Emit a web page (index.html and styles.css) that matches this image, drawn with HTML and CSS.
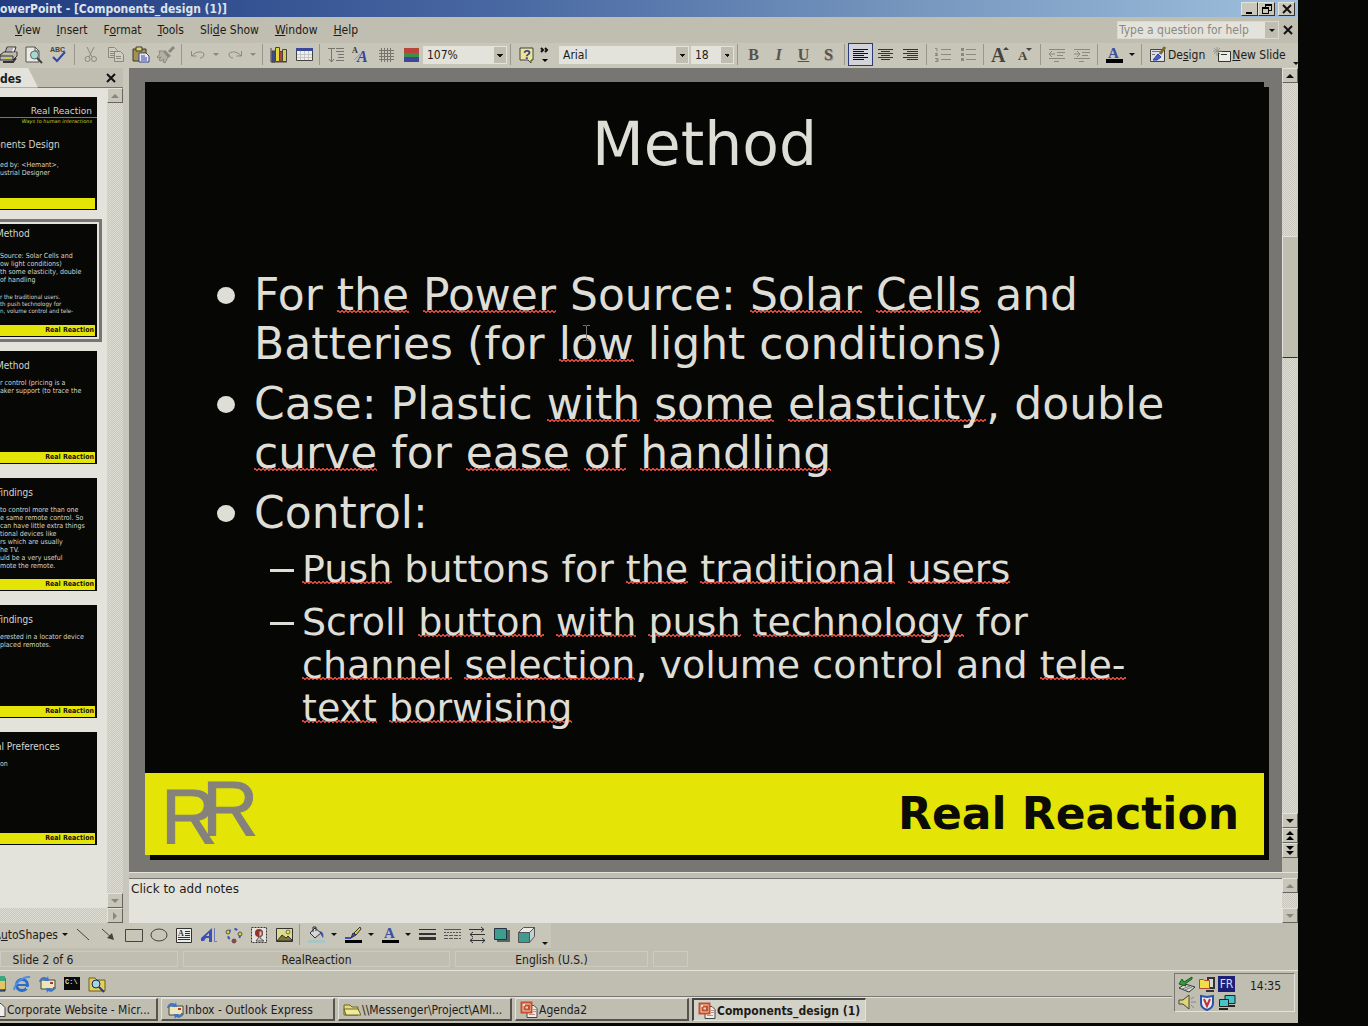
FILE: index.html
```html
<!DOCTYPE html>
<html lang="en">
<head>
<meta charset="utf-8">
<title>PowerPoint - [Components_design (1)]</title>
<link rel="stylesheet" href="styles.css">
</head>
<body>
<div class="screen">
  <header class="titlebar">
    <span class="title-text">owerPoint - [Components_design (1)]</span>
    <button class="win-btn" aria-label="Minimize"><svg width="14" height="12"><path d="M3 9h6v2H3z"/></svg></button>
    <button class="win-btn" aria-label="Restore"><svg width="14" height="12"><path d="M5 1h7v7H9V7h2V3H6v1H5zM2 4h7v7H2zm1 2v4h5V6z" fill-rule="evenodd"/></svg></button>
    <button class="win-btn win-close" aria-label="Close"><svg width="14" height="12"><path d="M3 2l8 8M11 2l-8 8" stroke="#111" stroke-width="2"/></svg></button>
  </header>

  <nav class="menubar">
    <button class="menu"><u>V</u>iew</button>
    <button class="menu"><u>I</u>nsert</button>
    <button class="menu">F<u>o</u>rmat</button>
    <button class="menu"><u>T</u>ools</button>
    <button class="menu">Sli<u>d</u>e Show</button>
    <button class="menu"><u>W</u>indow</button>
    <button class="menu"><u>H</u>elp</button>
    <div class="help-box">
      <input type="text" aria-label="Help question" placeholder="Type a question for help">
      <button class="drop" aria-label="Show questions"></button>
    </div>
    <button class="doc-close" aria-label="Close document"><svg width="10" height="10"><path d="M1 1l8 8M9 1l-8 8" stroke="#111" stroke-width="2"/></svg></button>
  </nav>

  <div class="toolbar">
    <button class="tool" aria-label="Print"><svg width="20" height="18"><path d="M6 7l2-6h9l-2 6" fill="#eee" stroke="#333"/><path d="M8 3h6M7 5h6" stroke="#777"/><path d="M1 9l4-3h13l-3 4z" fill="#c8c6bc" stroke="#333"/><path d="M1 9v5h13l4-4V6M14 14v-4H1" fill="#bbb9ae" stroke="#333"/><path d="M4 16h10l3-4" fill="none" stroke="#333" stroke-width="2"/><path d="M6 12h5" stroke="#d6c832" stroke-width="2"/></svg></button>
    <button class="tool" aria-label="Print Preview"><svg width="20" height="18"><path d="M2 1h9l4 4v11H2z" fill="#e9e9e2" stroke="#555"/><path d="M11 1v4h4" fill="none" stroke="#555"/><circle cx="10.500" cy="9" r="4" fill="#a5d8d4" stroke="#666"/><path d="M13 12l5 5" stroke="#45433b" stroke-width="2"/></svg></button>
    <button class="tool" aria-label="Spelling"><svg width="20" height="18"><text x="1" y="6" class="ico-abc">ABC</text><path d="M4 11l4 4 8-9" fill="none" stroke="#3446a4" stroke-width="2"/></svg></button>
    <span class="sep"></span>
    <button class="tool" aria-label="Cut"><svg width="18" height="18" stroke="#8b897f"><path d="M5 1l5 10M12 1L7 11"/><circle cx="5.500" cy="13" r="2.500" fill="none"/><circle cx="12" cy="13" r="2.500" fill="none"/></svg></button>
    <button class="tool" aria-label="Copy"><svg width="18" height="18" fill="#cfcdc2" stroke="#8b897f"><path d="M1.500 1.500h6l3 3v7h-9zM3 5.500h5M3 7.500h5M3 9.500h5"/><path d="M7.500 5.500h6l3 3v7h-9zM9 10.500h5M9 12.500h5"/></svg></button>
    <button class="tool" aria-label="Paste"><svg width="20" height="18"><path d="M2 3h13v12H2z" fill="#a3924e" stroke="#3c3a2b"/><path d="M5 1h6v4H5z" fill="#d8d46b" stroke="#3c3a2b"/><path d="M8 7h7l3 3v6H8z" fill="#e9e9ee" stroke="#3543a0"/><path d="M10 10h4M10 12h6M10 14h6" stroke="#3543a0"/></svg></button>
    <button class="tool" aria-label="Format Painter"><svg width="20" height="18"><path d="M18 1l-5 5" stroke="#8b897f" stroke-width="3"/><path d="M9 4l6 6-3 2-6-6z" fill="#8b897f"/><path d="M3 5h4l5 6-3 6-2-1 1-3-3 2-2-1 2-3-3 1-1-1 3-3z" fill="#b3b1a6" stroke="#8b897f"/></svg></button>
    <span class="sep"></span>
    <button class="tool" aria-label="Undo"><svg width="18" height="18"><path d="M2.500 5v5h5M3 10c3-5 11-5 12-2 0 3-2 4-4 4" fill="none" stroke="#8b897f"/></svg></button>
    <button class="arrow dim" aria-label="Undo list"></button>
    <button class="tool" aria-label="Redo"><svg width="18" height="18"><path d="M15.500 5v5h-5M15 10c-3-5-11-5-12-2 0 3 2 4 4 4" fill="none" stroke="#8b897f"/></svg></button>
    <button class="arrow dim" aria-label="Redo list"></button>
    <span class="sep"></span>
    <button class="tool" aria-label="Insert Chart"><svg width="18" height="18" stroke="#444"><path d="M1 2v14h16" fill="none"/><path d="M2 5h3v11H2z" fill="#3a49b4"/><path d="M5.500 1.500h4v14h-4z" fill="#e1d63b"/><path d="M9.500 5.500h3v10h-3z" fill="#b44437"/><path d="M12.500 3.500h4v12h-4z" fill="#d9cf4a"/></svg></button>
    <button class="tool" aria-label="Insert Table"><svg width="18" height="18"><path d="M1.500 2.500h16v12h-16z" fill="#eee" stroke="#45433e"/><path d="M1 2h17v3H1z" fill="#3a4898"/><path d="M2 8.500h15M2 11.500h15M5.500 5v9M9.500 5v9M13.500 5v9" stroke="#c5c5c5"/></svg></button>
    <span class="sep"></span>
    <button class="tool" aria-label="Expand All"><svg width="18" height="18" stroke="#77756d" fill="none"><path d="M4.500 2v14M2 13l2.500 3 2.500-3M1 2.500h7M9 2.500h8M9 5.500h8M11 8.500h6M11 11.500h6M9 14.500h8"/></svg></button>
    <button class="tool" aria-label="Show Formatting"><svg width="20" height="18"><text x="1" y="7" class="ico-small-a">A</text><path d="M3 14l6-6" stroke="#999"/><text x="6" y="16" class="ico-blue-a">A</text></svg></button>
    <button class="tool" aria-label="Show Grid"><svg width="18" height="18" stroke="#77756d"><path d="M4.500 2v14M7.500 2v14M10.500 2v14M13.500 2v14M2 4.500h15M2 7.500h15M2 10.500h15M2 13.500h15"/></svg></button>
    <button class="tool" aria-label="Color"><svg width="18" height="18"><path d="M2 2h15v5H2z" fill="#b9443b"/><path d="M2 7h15v4H2z" fill="#3d8e46"/><path d="M2 11h15v5H2z" fill="#3d469c"/></svg></button>
    <select class="combo zoom" aria-label="Zoom"><option>107%</option></select>
    <span class="sep"></span>
    <button class="tool" aria-label="Help"><svg width="18" height="18"><path d="M2 2h13v12h-2v3l-3-3H2z" fill="#e8e79b" stroke="#45433b"/><text x="5" y="13" class="ico-help">?</text></svg></button>
    <button class="more" aria-label="More buttons"><svg width="12" height="16"><path d="M2 1l2 2-2 2M6 1l2 2-2 2" fill="none" stroke="#111" stroke-width="2"/><path d="M3 12h6l-3 3z"/></svg></button>
    <span class="grip"></span>
    <select class="combo font-name" aria-label="Font"><option>Arial</option></select>
    <select class="combo font-size" aria-label="Font size"><option>18</option></select>
    <span class="sep"></span>
    <button class="tool letter"><b>B</b></button>
    <button class="tool letter"><i>I</i></button>
    <button class="tool letter"><u>U</u></button>
    <button class="tool letter shadowed">S</button>
    <span class="sep"></span>
    <button class="tool pressed" aria-label="Align Left"><svg width="18" height="14" stroke="#111"><path d="M1 1.500h15M1 3.500h11M1 5.500h15M1 7.500h11M1 9.500h15M1 11.500h11"/></svg></button>
    <button class="tool" aria-label="Center"><svg width="18" height="14" stroke="#333"><path d="M1 1.500h15M4 3.500h9M1 5.500h15M4 7.500h9M1 9.500h15M4 11.500h9"/></svg></button>
    <button class="tool" aria-label="Align Right"><svg width="18" height="14" stroke="#333"><path d="M1 1.500h15M5 3.500h11M1 5.500h15M5 7.500h11M1 9.500h15M5 11.500h11"/></svg></button>
    <span class="sep"></span>
    <button class="tool" aria-label="Numbering"><svg width="18" height="16" stroke="#8b897f"><path d="M7 2.500h10M7 7.500h10M7 12.500h10M1 1.500h2v3M1 6.500h3l-3 2h3M1 11.500h3v3H1M2 13h2" fill="none"/></svg></button>
    <button class="tool" aria-label="Bullets"><svg width="18" height="16" stroke="#8b897f"><path d="M7 2.500h10M7 7.500h10M7 12.500h10"/><path d="M2 2.500h3M2 7.500h3M2 12.500h3" stroke-width="3"/></svg></button>
    <span class="sep"></span>
    <button class="tool" aria-label="Increase Font Size"><svg width="20" height="18"><text x="1" y="16" class="ico-big-a">A</text><path d="M13 4h6l-3-3z" fill="#444"/></svg></button>
    <button class="tool" aria-label="Decrease Font Size"><svg width="20" height="18"><text x="3" y="14" class="ico-mid-a">A</text><path d="M11 2h6l-3 3z" fill="#444"/></svg></button>
    <span class="sep"></span>
    <button class="tool" aria-label="Decrease Indent"><svg width="18" height="16" stroke="#8b897f" fill="none"><path d="M1 2.500h16M9 5.500h8M9 8.500h6M1 11.500h16M6 14.500h5M1 7h6M4 4L1 7l3 3"/></svg></button>
    <button class="tool" aria-label="Increase Indent"><svg width="18" height="16" stroke="#8b897f" fill="none"><path d="M1 2.500h16M9 5.500h8M9 8.500h6M1 11.500h16M6 14.500h5M1 7h6M4 4l3 3-3 3"/></svg></button>
    <span class="sep"></span>
    <button class="tool" aria-label="Font Color"><svg width="18" height="18"><text x="3" y="12" class="ico-font-a">A</text><path d="M1 13h17v4H1z"/></svg></button>
    <button class="arrow" aria-label="Font colors"></button>
    <span class="sep"></span>
    <button class="tool wide"><svg width="18" height="18"><path d="M1.500 3.500h14v12h-14z" fill="#dfdfe6" stroke="#45433e"/><path d="M3 5.500h8M3 8.500h3" stroke="#777"/><path d="M4 14l5-6 3 3-4 3z" fill="#4b62c8" stroke="#2a3da0"/><path d="M11 8l5-7" stroke="#7d6a30" stroke-width="3"/></svg><span>De<u>s</u>ign</span></button>
    <button class="tool wide"><svg width="18" height="16"><path d="M5.500 4.500h12v10h-12z" fill="#ecece6" stroke="#333"/><path d="M8 7.500h6" stroke="#333"/><path d="M4 0v9M0 4h9M1 1l6 6M7 1L1 7" stroke="#99978c"/></svg><span><u>N</u>ew Slide</span></button>
    <button class="arrow low" aria-label="Toolbar options"></button>
  </div>

  <main class="workspace">
    <aside class="outline">
      <div class="tabs">
        <button class="tab">des</button>
        <button class="pane-close" aria-label="Close pane"><svg width="10" height="10"><path d="M1 1l8 8M9 1l-8 8" stroke="#111" stroke-width="2"/></svg></button>
      </div>
      <div class="outline-body">
        <div class="thumbs">
          <section class="thumb cover">
            <p class="brand">Real Reaction</p>
            <p class="slogan">Ways to human interactions</p>
            <h3>onents Design</h3>
            <p>ed by: &lt;Hemant&gt;,<br>ustrial Designer</p>
            <div class="band"></div>
          </section>
          <section class="thumb selected">
            <h3>Method</h3>
            <p>Source: Solar Cells and<br>ow light conditions)<br>th some elasticity, double<br>of handling</p>
            <p class="sub">r the traditional users.<br>th push technology for<br>n, volume control and tele-</p>
            <div class="band">Real Reaction</div>
          </section>
          <section class="thumb">
            <h3>Method</h3>
            <p>r control (pricing is a<br>aker support (to trace the</p>
            <div class="band">Real Reaction</div>
          </section>
          <section class="thumb">
            <h3>Findings</h3>
            <p>to control more than one<br>e same remote control. So<br>can have little extra things<br>tional devices like<br>rs which are usually<br>he TV.<br>uld be a very useful<br>mote the remote.</p>
            <div class="band">Real Reaction</div>
          </section>
          <section class="thumb">
            <h3>Findings</h3>
            <p>erested in a locator device<br>placed remotes.</p>
            <div class="band">Real Reaction</div>
          </section>
          <section class="thumb">
            <h3>al Preferences</h3>
            <p>on</p>
            <div class="band">Real Reaction</div>
          </section>
        </div>
        <div class="vbar">
          <button class="sb dim up" aria-label="Scroll slides up"></button>
          <span class="track"></span>
          <button class="sb dim down" aria-label="Scroll slides down"></button>
        </div>
        <div class="hbar">
          <span class="track"></span>
          <button class="sb dim right" aria-label="Scroll slides right"></button>
        </div>
      </div>
    </aside>

    <div class="editor">
      <div class="stage-row">
        <div class="stage">
          <article class="slide">
            <h1>Method</h1>
            <ul class="points">
              <li>For <s>the</s> <s>Power</s> Source: <s>Solar</s> <s>Cells</s> and<br>Batteries (for <s>low</s> light conditions)</li>
              <li>Case: Plastic <s>with</s> <s>some</s> <s>elasticity</s>, double<br><s>curve</s> for <s>ease</s> <s>of</s> <s>handling</s></li>
              <li>Control:
                <ul class="subpoints">
                  <li><s>Push</s> buttons for <s>the</s> <s>traditional</s> <s>users</s></li>
                  <li>Scroll <s>button</s> <s>with</s> <s>push</s> <s>technology</s> for<br><s>channel</s> <s>selection</s>, volume control and <s>tele-</s><br><s>text</s> <s>borwising</s></li>
                </ul>
              </li>
            </ul>
            <svg class="cursor" width="9" height="18"><path d="M1 1.500h3l.5 1 .5-1h3M4.500 2v14M1 16.500h3l.5-1 .5 1h3" fill="none" stroke="#77776f"/></svg>
            <footer class="slide-band">
              <svg class="logo" width="120" height="82"><text x="16" y="70">R</text><text x="57" y="62">R</text></svg>
              <span>Real Reaction</span>
            </footer>
          </article>
        </div>
        <div class="vbar main">
          <button class="sb up" aria-label="Scroll up"></button>
          <span class="track t1"></span>
          <span class="knob"></span>
          <span class="track t2"></span>
          <button class="sb down" aria-label="Scroll down"></button>
          <button class="sb nav" aria-label="Previous slide"><svg width="10" height="10"><path d="M1 4l4-4 4 4zM1 9l4-4 4 4z"/></svg></button>
          <button class="sb nav" aria-label="Next slide"><svg width="10" height="10"><path d="M1 0h8L5 4zM1 5h8L5 9z"/></svg></button>
          <span class="rest"></span>
        </div>
      </div>
      <div class="notes-row">
        <textarea class="notes" aria-label="Notes" placeholder="Click to add notes"></textarea>
        <div class="vbar">
          <button class="sb dim up" aria-label="Scroll notes up"></button>
          <span class="track"></span>
          <button class="sb dim down" aria-label="Scroll notes down"></button>
        </div>
      </div>
    </div>
  </main>

  <div class="drawbar">
    <div class="drawtools">
      <button class="shapes">A<u>u</u>toShapes</button>
      <button class="arrow" aria-label="AutoShapes list"></button>
      <button class="tool" aria-label="Line"><svg width="18" height="18"><path d="M2 3l12 11" stroke="#45433e"/></svg></button>
      <button class="tool" aria-label="Arrow"><svg width="18" height="18"><path d="M2 3l10 9" stroke="#45433e"/><path d="M14 14l-7-2 5-5z" fill="#45433e"/></svg></button>
      <button class="tool" aria-label="Rectangle"><svg width="18" height="18"><path d="M.5 3.500h17v12H.5z" fill="none" stroke="#45433e"/></svg></button>
      <button class="tool" aria-label="Oval"><svg width="18" height="18"><ellipse cx="9" cy="9" rx="8" ry="6" fill="none" stroke="#45433e"/></svg></button>
      <button class="tool" aria-label="Text Box"><svg width="18" height="18"><path d="M1.500 2.500h15v14h-15z" fill="#ecece6" stroke="#333"/><text x="3" y="10" class="ico-small-a">A</text><path d="M10 5.500h5M10 7.500h5M10 9.500h5M3 11.500h12M3 13.500h12" stroke="#333"/></svg></button>
      <button class="tool" aria-label="WordArt"><svg width="20" height="18"><path d="M2 12L13 2v14h-3v-4H7l-2 3H2zM10 10V7l-3 3z" fill="#3c50b4" fill-rule="evenodd"/><path d="M15.500 2v13.500H18" fill="none" stroke="#6a77b8"/></svg></button>
      <button class="tool" aria-label="Diagram"><svg width="20" height="18"><circle cx="10" cy="9" r="6" fill="none" stroke="#3c50b4" stroke-width="2" stroke-dasharray="3 4"/><circle cx="4" cy="6" r="2" fill="#d9d03c" stroke="#555"/><circle cx="16" cy="8" r="2" fill="#d9d03c" stroke="#555"/><circle cx="10" cy="15" r="2" fill="#b43a33" stroke="#555"/></svg></button>
      <button class="tool" aria-label="Clip Art"><svg width="18" height="18"><path d="M1.500 1.500h15v15h-15z" fill="#e6e4df" stroke="#333" stroke-dasharray="2 1"/><circle cx="9" cy="7" r="4" fill="#9c2f2a"/><path d="M9 5h3v5h-2v2l4 3H6l3-4z" fill="#e6c9b8" stroke="#555"/></svg></button>
      <button class="tool" aria-label="Picture"><svg width="18" height="18"><path d="M1.500 2.500h16v13h-16z" fill="#dfdb8c" stroke="#333"/><path d="M2 15l5-6 4 3 2-2 4 4v1z" fill="#77763d" stroke="#333"/><circle cx="13" cy="6" r="2" fill="#f0e94a" stroke="#666"/></svg></button>
      <span class="sep"></span>
      <button class="tool" aria-label="Fill Color"><svg width="18" height="18"><path d="M3 7l5-5 6 5-6 5z" fill="#d5d6dc" stroke="#333"/><path d="M6 6V1h3v4" fill="none" stroke="#333"/><path d="M13 5c3 1 4 4 3 7l-2-3z" fill="#3c50b4"/><path d="M1 14h17v3H1z" fill="#a9c6c6"/></svg></button>
      <button class="arrow" aria-label="Fill colors"></button>
      <button class="tool" aria-label="Line Color"><svg width="18" height="18"><path d="M1 12h6" stroke="#3c50b4" stroke-width="2"/><path d="M7 12l2-5 3 2z" fill="#3c50b4" stroke="#333"/><path d="M10 7l6-6 1 2-5 6z" fill="#d9d03c" stroke="#333"/><path d="M1 14h17v3H1z"/></svg></button>
      <button class="arrow" aria-label="Line colors"></button>
      <button class="tool" aria-label="Font Color"><svg width="18" height="18"><text x="3" y="12" class="ico-font-a">A</text><path d="M1 14h17v3H1z"/></svg></button>
      <button class="arrow" aria-label="Font colors"></button>
      <button class="tool" aria-label="Line Style"><svg width="18" height="16" stroke="#333"><path d="M1 2.500h17"/><path d="M1 7h17" stroke-width="2"/><path d="M1 11.500h17" stroke-width="3"/></svg></button>
      <button class="tool" aria-label="Dash Style"><svg width="18" height="16" stroke="#555"><path d="M1 2.500h17"/><path d="M1 5.500h17" stroke-dasharray="2 1"/><path d="M1 8.500h17M1 11.500h17" stroke-dasharray="4 1"/></svg></button>
      <button class="tool" aria-label="Arrow Style"><svg width="18" height="18" stroke="#333" fill="none"><path d="M1 3.500h15M13 1l3 2.500-3 2.500M2 8.500h15M5 6L2 8.500 5 11M2 14.500h15M5 12l-3 2.500L5 17M14 12l3 2.500-3 2.500"/></svg></button>
      <button class="tool" aria-label="Shadow Style"><svg width="18" height="18"><path d="M4 4h13v12H4z" fill="#55665f"/><path d="M1.500 2.500h12v11h-12z" fill="#3f9d90" stroke="#234"/></svg></button>
      <button class="tool" aria-label="3-D Style"><svg width="20" height="18" stroke="#555"><path d="M1.500 6.500l5-5h11l-5 5z" fill="#e8e8e4"/><path d="M12.500 6.500l5-5v9l-5 6z" fill="#c5d0ce"/><path d="M1.500 6.500h11v10h-11z" fill="#3f9d90"/></svg></button>
      <button class="arrow low" aria-label="Drawing options"></button>
    </div>
  </div>

  <div class="statusbar">
    <span class="cell c1">Slide 2 of 6</span>
    <span class="cell c2">RealReaction</span>
    <span class="cell c3">English (U.S.)</span>
    <span class="cell c4"></span>
  </div>

  <footer class="taskbar">
    <div class="task-rows">
      <div class="quick">
        <button class="tool" aria-label="Show Desktop"><svg width="18" height="18"><path d="M1 3h16v13H1z" fill="#3b6db3" stroke="#222"/><path d="M4 6h13v8H4z" fill="#e3c661"/><path d="M12 1h5v5h-5z" fill="#3fa57c"/></svg></button>
        <button class="tool" aria-label="Internet Explorer"><svg width="18" height="18"><circle cx="9" cy="10" r="5.500" fill="none" stroke="#2a6ccc" stroke-width="3"/><path d="M5 10h10" stroke="#2a6ccc" stroke-width="2"/><path d="M13 12h5v2h-5z" fill="#c0bdb1"/><path d="M1 15C2 8 10 1 17 2" fill="none" stroke="#4f8ee0" stroke-width="2"/></svg></button>
        <button class="tool" aria-label="Outlook Express"><svg width="18" height="18"><path d="M3 5h14v9H3z" fill="#eee6b7" stroke="#444"/><path d="M12 7h3v2h-3z" fill="#b4372f"/><path d="M1 7c1-5 5-6 8-4l1-2 1 5H6l1-1C5 4 4 5 3 7zM17 12c0 4-4 6-7 4l-1 2-1-5h5l-1 1c2 1 3 0 3-2z" fill="#3f74c4"/></svg></button>
        <button class="tool" aria-label="Command Prompt"><svg width="18" height="18"><path d="M1 2h16v13H1z" fill="#0a0a0a"/><text x="2" y="9" class="ico-cmd">C:\</text></svg></button>
        <button class="tool" aria-label="Search Folder"><svg width="18" height="18"><path d="M1 3h6l2 2h8v11H1z" fill="#e4cf5c" stroke="#6c5f1d"/><circle cx="8" cy="9" r="4" fill="#9cd9e0" stroke="#225"/><path d="M11 12l5 5" stroke="#24389a" stroke-width="2"/></svg></button>
      </div>
      <div class="tasks">
        <button class="task first"><svg width="6" height="18"><path d="M-5 2.500H1l4 4v9H-5z" fill="#eeeee9" stroke="#444"/></svg>Corporate Website - Micr...</button>
        <button class="task"><svg width="18" height="18"><path d="M3 5h14v9H3z" fill="#eee6b7" stroke="#444"/><path d="M12 7h3v2h-3z" fill="#b4372f"/><path d="M1 7c1-5 5-6 8-4l1-2 1 5H6l1-1C5 4 4 5 3 7zM17 12c0 4-4 6-7 4l-1 2-1-5h5l-1 1c2 1 3 0 3-2z" fill="#3f74c4"/></svg>Inbox - Outlook Express</button>
        <button class="task"><svg width="18" height="18"><path d="M1 14V4h6l2 2h6v8z" fill="#e3da7c" stroke="#6c651d"/><path d="M3 14L1 8h14l3 6z" fill="#f0eaa0" stroke="#6c651d"/></svg>\\Messenger\Project\AMI...</button>
        <button class="task"><svg width="18" height="18"><path d="M7 4.500h7l3 3v9H7z" fill="#eeeee9" stroke="#444"/><path d="M1.500 1.500h10v10h-10z" fill="#f0d9cd" stroke="#c4502b" stroke-width="2"/><path d="M5 4.500h4v4H4.500V5" fill="none" stroke="#c4502b" stroke-width="2"/><path d="M13 8.500h3M13 10.500h3M9 13.500h6" stroke="#c88"/></svg>Agenda2</button>
        <button class="task active"><svg width="18" height="18"><path d="M7 4.500h7l3 3v9H7z" fill="#eeeee9" stroke="#444"/><path d="M1.500 1.500h10v10h-10z" fill="#f0d9cd" stroke="#c4502b" stroke-width="2"/><path d="M5 4.500h4v4H4.500V5" fill="none" stroke="#c4502b" stroke-width="2"/><path d="M13 8.500h3M13 10.500h3M9 13.500h6" stroke="#c88"/></svg>Components_design (1)</button>
      </div>
    </div>
    <div class="tray">
      <div class="tray-icons">
        <svg width="18" height="17"><path d="M1 12l6-4 10 3-6 5z" fill="#dcdcd6" stroke="#333"/><path d="M4 13l8-3M7 14l7-3" stroke="#777"/><path d="M14 1L6 6 4 3 1 8l7 2-1-2 7-5z" fill="#2fa23a" stroke="#185e20"/></svg>
        <svg width="18" height="17"><path d="M10 2h6v10h-6z" fill="#d8d8d0" stroke="#333" stroke-width="2"/><path d="M8 15h8" stroke="#333" stroke-width="2"/><path d="M1.500 3.500h4l1 1h5v8h-10z" fill="#eddf4a" stroke="#b4442f"/></svg>
        <span class="lang">FR</span>
        <svg width="18" height="17"><path d="M1 6h4l6-5v14l-6-5H1z" fill="#ded574" stroke="#444"/><path d="M13 5l3-2M13 8h5M13 11l3 3" stroke="#888"/></svg>
        <svg width="18" height="17"><path d="M3 2l6 1 6-1v7c0 4-3 6-6 7-3-1-6-3-6-7z" fill="#e8e8f0" stroke="#2854a8" stroke-width="2"/><path d="M6 5l3 7 3-7" fill="none" stroke="#c02f36" stroke-width="2"/></svg>
        <svg width="18" height="17"><path d="M7 1.500h10v8H7z" fill="#45c3c6" stroke="#222"/><path d="M9 12h8" stroke="#222" stroke-width="2"/><path d="M1.500 5.500h9v7h-9z" fill="#45c3c6" stroke="#222"/><path d="M1 15h9" stroke="#222" stroke-width="2"/></svg>
      </div>
      <span class="clock">14:35</span>
    </div>
  </footer>
</div>
</body>
</html>
```

FILE: styles.css
```css
:root {
  --face: #c0bdb1;
  --tool: #c8c5b9;
  --light: #e3e3db;
  --shade: #787672;
  --ink: #1d1c18;
  --yellow: #e4e506;
  --ui: "DejaVu Sans Condensed", "DejaVu Sans", sans-serif;
  --wide: "DejaVu Sans", sans-serif;
}

* { box-sizing: border-box; }

body {
  margin: 0;
  padding: 0 70px 3px 0;
  min-height: 100vh;
  display: flex;
  background: #070806;
  color: var(--ink);
  font: 12px/16px var(--ui);
  overflow: hidden;
}

button, input, select, textarea {
  margin: 0;
  padding: 0;
  border: 0;
  border-radius: 0;
  background: none;
  color: inherit;
  font: inherit;
}

p, h1, h3, ul { margin: 0; padding: 0; list-style: none; }
svg { display: block; flex: none; }

.screen {
  flex: 1;
  min-width: 0;
  display: flex;
  flex-direction: column;
  background: var(--face);
  overflow: hidden;
}

/* Title bar */
.titlebar {
  display: flex;
  align-items: center;
  height: 17px;
  padding-right: 3px;
  background: linear-gradient(90deg, #213c80, #4a6aa4 40%, #7696be 70%, #9ebfdc);
}
.title-text {
  flex: 1;
  color: #dfe3ea;
  font-weight: bold;
  white-space: nowrap;
}
.win-btn {
  width: 17px;
  height: 14px;
  display: grid;
  place-items: center;
  background: #cac7bb;
  border: 1px solid;
  border-color: var(--light) #33322e #33322e var(--light);
}
.win-close { margin-left: 3px; }

/* Menu bar */
.menubar {
  display: flex;
  align-items: center;
  height: 26px;
  padding: 0 5px 0 7px;
}
.menu { padding: 0 8px; white-space: nowrap; }
.help-box {
  display: flex;
  width: 162px;
  height: 18px;
  margin-left: auto;
  background: var(--light);
  border: 1px solid #d9d8ce;
}
.help-box input { flex: 1; min-width: 0; padding-left: 1px; }
.help-box input::placeholder { color: #8a8981; opacity: 1; }
.drop { width: 13px; display: grid; place-items: center; background: var(--face); }
.drop::after, .arrow::after {
  content: "";
  border: 3px solid transparent;
  border-top-color: #111;
  border-bottom: 0;
}
.doc-close { margin-left: 4px; }

/* Toolbars */
.toolbar, .drawtools {
  display: flex;
  align-items: center;
  height: 25px;
  padding-bottom: 2px;
  background: var(--tool);
}
.toolbar > :first-child { margin-left: -4px; }
.tool {
  flex: none;
  width: 25px;
  height: 23px;
  display: flex;
  align-items: center;
  justify-content: center;
}
.tool.wide { width: auto; gap: 1px; padding: 0 4px; white-space: nowrap; }
.tool.pressed { background: #d3d4da; border: 1px solid #2b3a78; }
.tool.letter { color: #55534c; font: bold 16px/20px "Liberation Serif", serif; }
.tool.shadowed { text-shadow: 1px 1px #99978c; }
.sep {
  flex: none;
  width: 1px;
  height: 21px;
  margin: 0 3px;
  background: #99978d;
}
.arrow {
  flex: none;
  width: 12px;
  height: 20px;
  display: grid;
  place-items: center;
}
.arrow.dim::after { border-top-color: #8b897f; }
.arrow.low { margin-left: auto; place-items: end center; }
.more { width: 12px; }
.grip {
  width: 4px;
  height: 15px;
  margin: 0 4px;
  background: repeating-linear-gradient(#99978d 0 1px, transparent 1px 3px);
}
.combo {
  flex: none;
  height: 18px;
  padding-left: 3px;
  appearance: none;
  border: 1px solid var(--light);
  background:
    conic-gradient(from 315deg at 50% 100%, #111 90deg, transparent 0) right 3px top 7px / 6px 3px no-repeat,
    linear-gradient(var(--face), var(--face)) right / 12px 100% no-repeat,
    var(--light);
}
.combo.zoom { width: 84px; }
.combo.font-name { width: 130px; margin-right: 2px; }
.combo.font-size { width: 43px; }

.ico-abc { font: bold 7px "Liberation Sans", sans-serif; fill: #444; }
.ico-small-a { font: bold 8px "Liberation Serif", serif; fill: #333; }
.ico-blue-a { font: italic bold 16px "Liberation Serif", serif; fill: #3446a4; }
.ico-big-a { font: bold 20px "Liberation Serif", serif; fill: #45433e; }
.ico-mid-a { font: bold 13px "Liberation Serif", serif; fill: #45433e; }
.ico-font-a { font: bold 15px "Liberation Serif", serif; fill: #3c50a4; }
.ico-help { font: bold 13px "Liberation Sans", sans-serif; fill: #3a3a80; }
.ico-cmd { font: bold 7px "Liberation Mono", monospace; fill: #ddd; }

/* Workspace */
.workspace { flex: 1; display: flex; min-height: 0; }

.outline {
  flex: none;
  width: 129px;
  display: flex;
  flex-direction: column;
  border-right: 6px solid #c9c7bc;
}
.tabs {
  display: flex;
  justify-content: space-between;
  align-items: center;
  height: 20px;
  padding-right: 7px;
  border-bottom: 1px solid var(--shade);
}
.tab {
  height: 20px;
  width: 38px;
  padding-top: 3px;
  text-align: left;
  font-weight: bold;
  background: var(--light);
  clip-path: polygon(0 0, 28px 0, 38px 100%, 0 100%);
}
.outline-body {
  flex: 1;
  display: grid;
  grid-template-columns: 1fr 16px;
  grid-template-rows: 1fr 15px;
  background: var(--light);
  min-height: 0;
}
.thumbs {
  display: flex;
  flex-direction: column;
  gap: 14px;
  padding: 9px 0 0;
  overflow: hidden;
}
.thumb {
  flex: none;
  position: relative;
  display: flex;
  flex-direction: column;
  width: 97px;
  height: 113px;
  padding: 9px 0 1px;
  background: #070706;
  color: #d5d5cd;
  font-size: 7px;
  line-height: 8px;
  white-space: nowrap;
}
.thumb h3 { margin: 0 0 7px -4px; font: 10px/12px var(--ui); }
.thumb.selected { padding-top: 4px; outline: 3px solid var(--shade); outline-offset: 2px; }
.selected h3 { margin-bottom: 12px; }
.thumb .sub { margin-top: 9px; font-size: 6px; line-height: 7px; }
.thumb .band {
  margin: auto 2px 0 0;
  padding-right: 1px;
  height: 11px;
  background: var(--yellow);
  color: #111;
  font-size: 7px;
  font-weight: bold;
  line-height: 11px;
  text-align: right;
}
.cover h3 { margin: 15px 0 10px -5px; }
.cover .brand {
  padding-right: 5px;
  border-bottom: 1px solid #77776f;
  font: 9px/11px var(--wide);
  text-align: right;
}
.cover .slogan {
  padding-right: 5px;
  color: #c9ca2c;
  font: italic 5px/6px var(--wide);
  text-align: right;
}

/* Scroll bars */
.vbar { display: flex; flex-direction: column; width: 16px; }
.hbar { grid-column: 1 / -1; display: flex; }
.track {
  flex: 1;
  background: repeating-conic-gradient(#c9c7be 0 25%, #dcdcd3 0 50%) 0 0 / 2px 2px;
}
.sb {
  flex: none;
  width: 16px;
  height: 15px;
  display: grid;
  place-items: center;
  background: var(--tool);
  border: 1px solid;
  border-color: var(--light) #66645e #66645e var(--light);
}
.sb::after { content: ""; border: 4px solid transparent; }
.sb.up::after { border-bottom-color: #111; border-top: 0; }
.sb.down::after { border-top-color: #111; border-bottom: 0; }
.sb.right::after { border-left-color: #111; border-right: 0; }
.sb.dim.up::after { border-bottom-color: #88867d; }
.sb.dim.down::after { border-top-color: #88867d; }
.sb.dim.right::after { border-left-color: #88867d; }
.sb.nav::after { display: none; }
.main .t1 { flex: 153; }
.main .t2 { flex: 456; }
.knob {
  flex: 121;
  background: var(--face);
  border: 1px solid;
  border-color: var(--light) var(--face) #33322e var(--light);
}
.rest { height: 14px; }

/* Slide editor */
.editor { flex: 1; min-width: 0; display: flex; flex-direction: column; }
.stage-row { flex: 1; display: flex; }
.stage {
  flex: 1;
  min-width: 0;
  display: flex;
  padding: 14px 18px 17px 16px;
  background: var(--shade);
}
.slide {
  flex: 1;
  position: relative;
  display: flex;
  flex-direction: column;
  padding-top: 24px;
  background: #060605;
  box-shadow: 5px 5px #060605;
  color: #deded6;
  font-family: var(--wide);
  white-space: nowrap;
}
.slide h1 { font: 60px/76px var(--wide); text-align: center; }
.points { margin: 88px 0 0 109px; font-size: 44px; line-height: 49px; }
.points > li { position: relative; margin-bottom: 11px; }
.points > li::before {
  content: "";
  position: absolute;
  left: -37px;
  top: 17px;
  width: 18px;
  height: 17px;
  border-radius: 50%;
  background: #deded6;
}
.subpoints { margin: 11px 0 0 48px; font-size: 38px; line-height: 43px; }
.subpoints li { position: relative; margin-bottom: 10px; }
.subpoints li::before {
  content: "";
  position: absolute;
  left: -32px;
  top: 21px;
  width: 24px;
  height: 3px;
  background: #deded6;
}
/* Spelling squiggle: a small zigzag just below the baseline */
.slide s {
  text-decoration: none;
  background:
    linear-gradient(45deg, transparent 35%, #d4453c 35% 65%, transparent 65%) 0 calc(100% - 7px) / 4px 3px repeat-x,
    linear-gradient(-45deg, transparent 35%, #d4453c 35% 65%, transparent 65%) 2px calc(100% - 7px) / 4px 3px repeat-x;
}
.cursor { position: absolute; left: 437px; top: 242px; }
.slide-band {
  display: flex;
  align-items: center;
  justify-content: space-between;
  height: 82px;
  margin-top: auto;
  padding-right: 25px;
  background: var(--yellow);
  color: #0b0b08;
  font-size: 44px;
  font-weight: bold;
}
.logo {
  font: 78px "Liberation Sans", sans-serif;
  fill: #84827a;
  stroke: #84827a;
}

.notes-row {
  display: flex;
  height: 51px;
  border-top: 1px solid var(--light);
}
.notes {
  flex: 1;
  margin-top: 5px;
  padding: 2px;
  resize: none;
  overflow: hidden;
  background: var(--light);
  border-top: 1px solid var(--shade);
  font-family: var(--wide);
}
.notes::placeholder { color: var(--ink); opacity: 1; }
.notes-row .vbar { margin-top: 5px; }

/* Drawing bar and status bar */
.drawbar { display: flex; background: var(--face); }
.drawtools .shapes { width: 58px; height: 20px; direction: rtl; white-space: nowrap; }
.drawtools .shapes + .arrow { width: 13px; }
.statusbar {
  display: flex;
  gap: 5px;
  height: 23px;
  padding: 3px 0;
  border-bottom: 1px solid var(--light);
}
.cell {
  border: 1px solid #cdcbc0;
  text-align: center;
  line-height: 16px;
}
.c1 { width: 178px; padding-right: 92px; }
.c2 { width: 267px; }
.c3 { width: 193px; }
.c4 { width: 35px; }

/* Taskbar */
.taskbar { display: flex; gap: 2px; padding-right: 3px; height: 52px; }
.task-rows { flex: 1; min-width: 0; }
.quick { display: flex; height: 26px; padding: 1px 0; border-bottom: 1px solid var(--shade); }
.quick > :first-child { margin-left: -16px; }
.tasks { display: flex; gap: 3px; height: 25px; border-top: 1px solid var(--light); }
.task {
  flex: none;
  display: flex;
  align-items: center;
  gap: 1px;
  width: 174px;
  height: 23px;
  padding: 1px 0 0 4px;
  white-space: nowrap;
  border: solid;
  border-width: 1px 2px 2px 1px;
  border-color: var(--light) #55534d #55534d var(--light);
}
.task.first { width: 158px; padding-left: 0; border-left: 0; }
.task.active {
  font-weight: bold;
  background: #d3d2c9;
  border-width: 2px 1px 1px 2px;
  border-color: #44433e var(--light) var(--light) #44433e;
}
.tray {
  display: flex;
  align-items: flex-start;
  justify-content: space-between;
  width: 121px;
  height: 39px;
  margin-top: 2px;
  padding: 2px 13px 0 3px;
  border: 1px solid;
  border-color: var(--shade) var(--light) var(--light) var(--shade);
}
.tray-icons { display: grid; grid-template-columns: repeat(3, 18px); gap: 1px 2px; }
.lang {
  width: 17px;
  height: 16px;
  background: #1b1f78;
  color: #dcdce4;
  text-align: center;
}
.clock { line-height: 20px; }
```
